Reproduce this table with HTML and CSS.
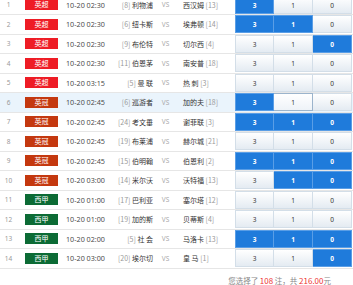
FILE: index.html
```html
<!DOCTYPE html>
<html>
<head>
<meta charset="utf-8">
<link rel="stylesheet" href="styles.css">
</head>
<body>
<div class="list">
  <div class="row"><span class="num">1</span><span class="lg epl">英超</span><span class="date">10-20 02:30</span><span class="home"><i>[8]</i> 利物浦</span><span class="vs">VS</span><span class="away">西汉姆 <i>[13]</i></span><span class="odds"><b class="on">3</b><b>1</b><b>0</b></span></div>
  <div class="row"><span class="num">2</span><span class="lg epl">英超</span><span class="date">10-20 02:30</span><span class="home"><i>[6]</i> 纽卡斯</span><span class="vs">VS</span><span class="away">埃弗顿 <i>[14]</i></span><span class="odds"><b class="on">3</b><b class="on">1</b><b>0</b></span></div>
  <div class="row"><span class="num">3</span><span class="lg epl">英超</span><span class="date">10-20 02:30</span><span class="home"><i>[9]</i> 布伦特</span><span class="vs">VS</span><span class="away">切尔西 <i>[4]</i></span><span class="odds"><b>3</b><b>1</b><b class="on">0</b></span></div>
  <div class="row"><span class="num">4</span><span class="lg epl">英超</span><span class="date">10-20 02:30</span><span class="home"><i>[11]</i> 伯恩茅</span><span class="vs">VS</span><span class="away">南安普 <i>[18]</i></span><span class="odds"><b>3</b><b>1</b><b>0</b></span></div>
  <div class="row"><span class="num">5</span><span class="lg epl">英超</span><span class="date">10-20 03:15</span><span class="home"><i>[5]</i> 曼 联</span><span class="vs">VS</span><span class="away">热 刺 <i>[3]</i></span><span class="odds"><b>3</b><b>1</b><b>0</b></span></div>
  <div class="row hover"><span class="num">6</span><span class="lg champ">英冠</span><span class="date">10-20 02:45</span><span class="home"><i>[6]</i> 巡游者</span><span class="vs">VS</span><span class="away">加的夫 <i>[18]</i></span><span class="odds"><b class="on">3</b><b class="hl">1</b><b>0</b></span></div>
  <div class="row"><span class="num">7</span><span class="lg champ">英冠</span><span class="date">10-20 02:45</span><span class="home"><i>[24]</i> 考文垂</span><span class="vs">VS</span><span class="away">谢菲联 <i>[3]</i></span><span class="odds"><b class="on">3</b><b class="on">1</b><b class="on">0</b></span></div>
  <div class="row"><span class="num">8</span><span class="lg champ">英冠</span><span class="date">10-20 02:45</span><span class="home"><i>[19]</i> 布莱浦</span><span class="vs">VS</span><span class="away">赫尔城 <i>[21]</i></span><span class="odds"><b>3</b><b>1</b><b>0</b></span></div>
  <div class="row"><span class="num">9</span><span class="lg champ">英冠</span><span class="date">10-20 02:45</span><span class="home"><i>[15]</i> 伯明翰</span><span class="vs">VS</span><span class="away">伯恩利 <i>[2]</i></span><span class="odds"><b class="on">3</b><b class="on">1</b><b class="on">0</b></span></div>
  <div class="row"><span class="num">10</span><span class="lg champ">英冠</span><span class="date">10-20 03:00</span><span class="home"><i>[14]</i> 米尔沃</span><span class="vs">VS</span><span class="away">沃特福 <i>[13]</i></span><span class="odds"><b>3</b><b class="on">1</b><b class="on">0</b></span></div>
  <div class="row"><span class="num">11</span><span class="lg liga">西甲</span><span class="date">10-20 01:00</span><span class="home"><i>[17]</i> 巴利亚</span><span class="vs">VS</span><span class="away">塞尔塔 <i>[12]</i></span><span class="odds"><b>3</b><b>1</b><b>0</b></span></div>
  <div class="row"><span class="num">12</span><span class="lg liga">西甲</span><span class="date">10-20 01:00</span><span class="home"><i>[19]</i> 加的斯</span><span class="vs">VS</span><span class="away">贝蒂斯 <i>[4]</i></span><span class="odds"><b>3</b><b>1</b><b>0</b></span></div>
  <div class="row"><span class="num">13</span><span class="lg liga">西甲</span><span class="date">10-20 02:00</span><span class="home"><i>[5]</i> 社 会</span><span class="vs">VS</span><span class="away">马洛卡 <i>[13]</i></span><span class="odds"><b class="on">3</b><b class="on">1</b><b class="on">0</b></span></div>
  <div class="row"><span class="num">14</span><span class="lg liga">西甲</span><span class="date">10-20 03:00</span><span class="home"><i>[20]</i> 埃尔切</span><span class="vs">VS</span><span class="away">皇 马 <i>[1]</i></span><span class="odds"><b>3</b><b>1</b><b class="on">0</b></span></div>
</div>
<div class="footer">您选择了 <em>108</em> 注，共 <em>216.00</em>元</div>
</body>
</html>
```
FILE: styles.css
```css
html, body { margin: 0; padding: 0; background: #fff; }
body {
  font-family: "Noto Sans", "Noto Sans CJK SC", sans-serif;
  color: #333;
  overflow: hidden;
  width: 353px;
  height: 285px;
}
.list { margin-top: -4.5px; }
.row {
  display: flex;
  align-items: center;
  height: 19.5px;
  box-sizing: border-box;
  border-bottom: 1px solid #e6e6e6;
  font-size: 7px;
  white-space: nowrap;
}
.row.hover { background: #eaf4fc; }
.num {
  width: 17px;
  text-align: center;
  color: #999;
  font-size: 6.5px;
}
.lg {
  margin-left: 8px;
  width: 33px;
  height: 11px;
  line-height: 11px;
  text-align: center;
  color: #fff;
  font-size: 7px;
  font-family: "Noto Sans CJK SC", sans-serif;
}
.epl { background: #ee1c25; }
.champ { background: #c4380f; }
.liga { background: #0c6b35; }
.date {
  margin-left: 8px;
  width: 45px;
  font-size: 7.2px;
  color: #444;
  font-family: "Open Sans", "Noto Sans", sans-serif;
}
.home {
  width: 42px;
  text-align: right;
  font-family: "Noto Sans CJK SC", sans-serif;
}
.home i, .away i { font-style: normal; color: #999; }
.vs {
  width: 25px;
  text-align: center;
  color: #aaa;
  font-size: 6.5px;
}
.away {
  margin-left: 5px;
  width: 52px;
  font-family: "Noto Sans CJK SC", sans-serif;
}
.odds {
  display: flex;
  height: 18px;
}
.odds b {
  width: 39px;
  height: 18px;
  line-height: 17px;
  box-sizing: border-box;
  text-align: center;
  font-size: 6.5px;
  font-weight: normal;
  border: 1px solid #d3dee8;
  border-left-width: 0;
  background: linear-gradient(#ffffff, #e4ebf2);
  color: #333;
}
.odds b:first-child { border-left-width: 1px; }
.odds b.on {
  background: #1f7bdb;
  border-color: #5a9ee6;
  color: #fff;
  font-weight: bold;
}
.odds b.hl { border-color: #9bb4cc; background: linear-gradient(#fff, #eef3f8); }
.footer {
  text-align: right;
  padding-right: 22px;
  margin-top: 6px;
  font-size: 7.5px;
  color: #888;
  font-family: "Noto Sans CJK SC", sans-serif;
}
.footer em { font-style: normal; color: #e33; font-size: 8px; }
```
